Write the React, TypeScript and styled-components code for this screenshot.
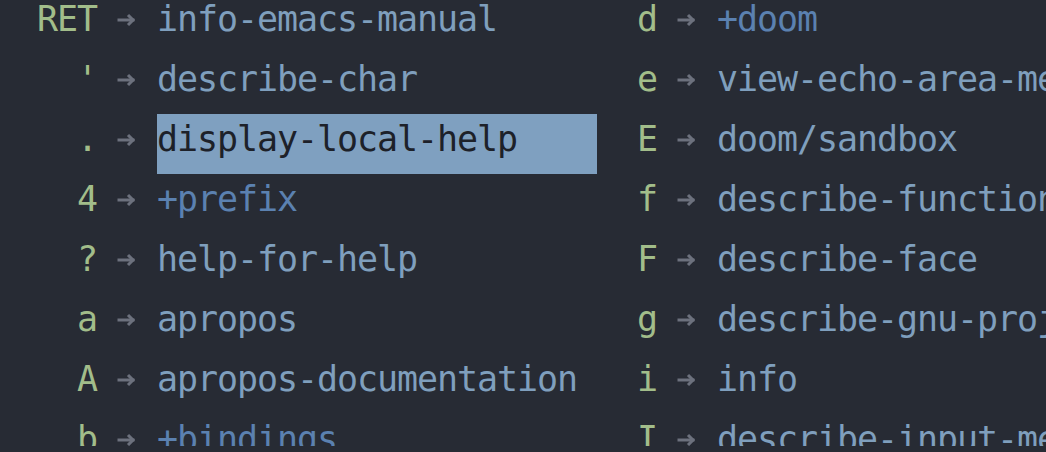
import styled, { createGlobalStyle } from 'styled-components'
import { Fragment } from 'react'

const GlobalStyle = createGlobalStyle`
  html, body {
    margin: 0;
    padding: 0;
    background: #272b34;
    overflow: hidden;
  }
`

type Binding = {
  key: string;
  desc: string;
  prefix?: boolean;
  active?: boolean;
}

const left: Binding[] = [
  { key: 'RET', desc: 'info-emacs-manual' },
  { key: "'", desc: 'describe-char' },
  { key: '.', desc: 'display-local-help', active: true },
  { key: '4', desc: '+prefix', prefix: true },
  { key: '?', desc: 'help-for-help' },
  { key: 'a', desc: 'apropos' },
  { key: 'A', desc: 'apropos-documentation' },
  { key: 'b', desc: '+bindings', prefix: true },
]

const right: Binding[] = [
  { key: 'd', desc: '+doom', prefix: true },
  { key: 'e', desc: 'view-echo-area-messages' },
  { key: 'E', desc: 'doom/sandbox' },
  { key: 'f', desc: 'describe-function' },
  { key: 'F', desc: 'describe-face' },
  { key: 'g', desc: 'describe-gnu-project' },
  { key: 'i', desc: 'info' },
  { key: 'I', desc: 'describe-input-method' },
]

const Popup = styled.div`
  width: 1046px;
  height: 452px;
  background: #272b34;
  overflow: hidden;
  display: flex;
  padding-left: 37px;
  margin-top: -6px;
  font-family: "DejaVu Sans Mono", "Liberation Mono", monospace;
  font-size: 35px;
  letter-spacing: -1.07px;
  white-space: pre;
  box-sizing: border-box;
`

const Column = styled.div<{ $keyCols: number; $descCols: number }>`
  display: grid;
  grid-template-columns: ${p => p.$keyCols * 20}px 20px 20px 20px ${p => p.$descCols * 20}px;
  grid-auto-rows: 60px;
  margin-right: 40px;
  flex-shrink: 0;
`

const Key = styled.span`
  color: #a2bd8a;
  text-align: right;
  line-height: 50px;
  padding-bottom: 10px;
`

const ArrowCell = styled.span`
  grid-column: 3;
  display: flex;
  align-items: flex-start;
  padding-top: 19px;
  color: #6c717d;
`

const Desc = styled.span<{ $prefix?: boolean; $active?: boolean }>`
  grid-column: 5;
  line-height: 50px;
  padding-bottom: 10px;
  color: ${p => (p.$active ? '#1d2129' : p.$prefix ? '#5b81b0' : '#7f9fbd')};
  background: ${p => (p.$active ? '#7fa0c0' : 'transparent')};
`

function Arrow() {
  return (
    <ArrowCell>
      <svg width="20" height="14" viewBox="0 0 20 14" fill="none" stroke="currentColor" strokeWidth="3" strokeLinecap="square">
        <path d="M2 7h14" />
        <path d="M11 2l5 5-5 5" strokeLinejoin="miter" strokeLinecap="butt" />
      </svg>
    </ArrowCell>
  )
}

function Col({ items, keyCols, descCols }: { items: Binding[]; keyCols: number; descCols: number }) {
  return (
    <Column $keyCols={keyCols} $descCols={descCols}>
      {items.map(b => (
        <Fragment key={b.key}>
          <Key>{b.key}</Key>
          <Arrow />
          <Desc $prefix={b.prefix} $active={b.active}>{b.desc}</Desc>
        </Fragment>
      ))}
    </Column>
  )
}

export default function App() {
  return (
    <>
      <GlobalStyle />
      <Popup>
        <Col items={left} keyCols={3} descCols={22} />
        <Col items={right} keyCols={1} descCols={24} />
      </Popup>
    </>
  )
}
